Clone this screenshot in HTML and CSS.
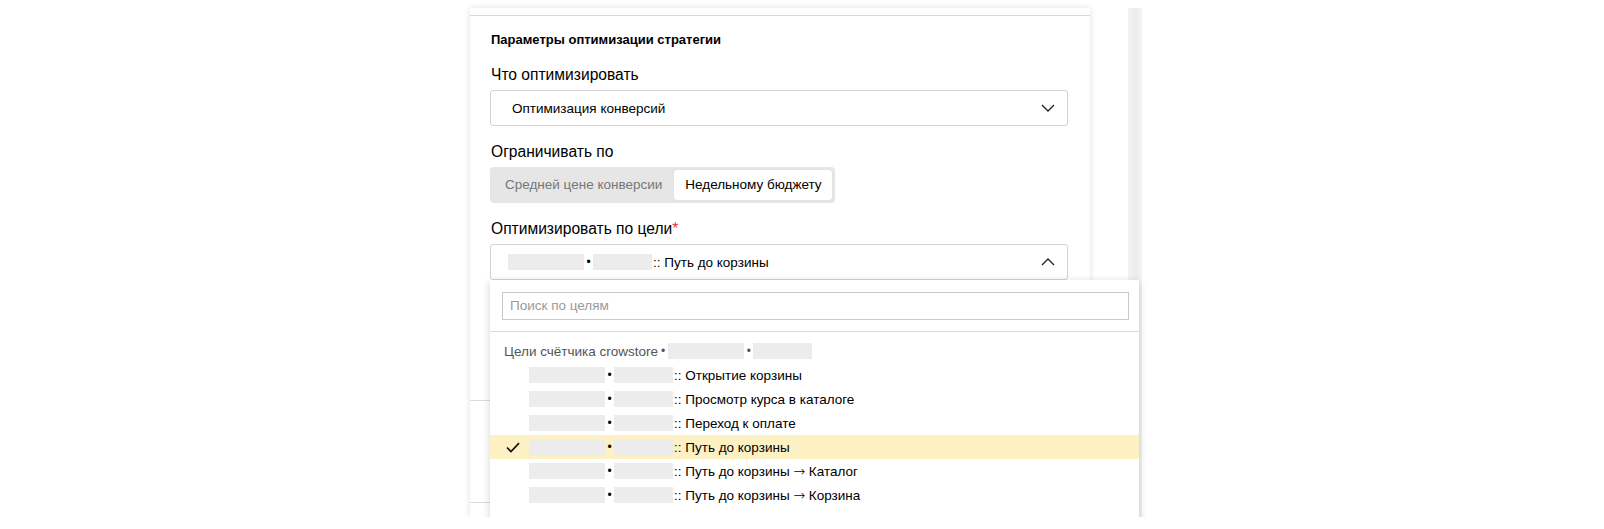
FILE: index.html
```html
<!DOCTYPE html>
<html lang="ru">
<head>
<meta charset="utf-8">
<title>Параметры оптимизации стратегии</title>
<link rel="stylesheet" href="styles.css">
</head>
<body>
<div class="page">
  <div class="panel">
    <div class="panel-top"></div>
    <div class="panel-body">
      <div class="section-title">Параметры оптимизации стратегии</div>

      <div class="label">Что оптимизировать</div>
      <div class="select select-main">
        <span class="select-text">Оптимизация конверсий</span>
        <svg class="chev" width="14" height="8" viewBox="0 0 14 8"><polyline points="1,1 7,7 13,1" fill="none" stroke="#222" stroke-width="1.3"/></svg>
      </div>

      <div class="label">Ограничивать по</div>
      <div class="segmented">
        <div class="seg">Средней цене конверсии</div>
        <div class="seg seg-active">Недельному бюджету</div>
      </div>

      <div class="label">Оптимизировать по цели<span class="req">*</span></div>
      <div class="goal-field">
        <div class="select select-goal">
          <span class="goal"><span class="blk blk-a"></span><span class="dot">•</span><span class="blk blk-b"></span><span class="goal-name">:: Путь до корзины</span></span>
          <svg class="chev" width="14" height="8" viewBox="0 0 14 8"><polyline points="1,7 7,1 13,7" fill="none" stroke="#222" stroke-width="1.3"/></svg>
        </div>

        <div class="popup">
          <div class="search-wrap">
            <div class="search">Поиск по целям</div>
          </div>
          <div class="list">
            <div class="group">Цели счётчика crowstore <span class="dot-g">•</span><span class="blk blk-a"></span><span class="dot">•</span><span class="blk blk-b"></span></div>
            <div class="item"><span class="check"></span><span class="blk blk-a"></span><span class="dot">•</span><span class="blk blk-b"></span><span class="goal-name">:: Открытие корзины</span></div>
            <div class="item"><span class="check"></span><span class="blk blk-a"></span><span class="dot">•</span><span class="blk blk-b"></span><span class="goal-name">:: Просмотр курса в каталоге</span></div>
            <div class="item"><span class="check"></span><span class="blk blk-a"></span><span class="dot">•</span><span class="blk blk-b"></span><span class="goal-name">:: Переход к оплате</span></div>
            <div class="item item-selected"><span class="check"><svg width="14" height="11" viewBox="0 0 14 11"><polyline points="1,5.5 5,9.5 13,1.2" fill="none" stroke="#111" stroke-width="1.7"/></svg></span><span class="blk blk-a"></span><span class="dot">•</span><span class="blk blk-b"></span><span class="goal-name">:: Путь до корзины</span></div>
            <div class="item"><span class="check"></span><span class="blk blk-a"></span><span class="dot">•</span><span class="blk blk-b"></span><span class="goal-name">:: Путь до корзины <span class="arrow">→</span> Каталог</span></div>
            <div class="item"><span class="check"></span><span class="blk blk-a"></span><span class="dot">•</span><span class="blk blk-b"></span><span class="goal-name">:: Путь до корзины <span class="arrow">→</span> Корзина</span></div>
          </div>
        </div>
      </div>

      <div class="under-space"></div>
      <div class="divider"></div>
      <div class="under-space under-second"></div>
      <div class="divider"></div>
    </div>
  </div>
  <div class="scroll-strip"></div>
</div>
</body>
</html>
```

FILE: styles.css
```css
* { box-sizing: border-box; }

html, body {
  margin: 0;
  padding: 0;
  background: #fff;
}

body {
  font-family: "Liberation Sans", Arial, sans-serif;
  color: #000;
}

.page {
  display: flex;
  align-items: stretch;
  padding: 8px 0 0 470px;
  height: 517px;
  overflow: hidden;
}

.panel {
  width: 620px;
  background: #fff;
  box-shadow: 0 0 6px rgba(0, 0, 0, 0.13);
  position: relative;
}

.panel-top {
  height: 8px;
  border-bottom: 1px solid #d9d9d9;
}

.panel-body {
  padding: 0 22px 0 20px;
}

.section-title {
  margin-top: 16px;
  font-size: 13px;
  line-height: 16px;
  font-weight: bold;
  padding-left: 1px;
}

.label {
  margin-top: 16px;
  font-size: 15.6px;
  line-height: 20px;
  padding-left: 1px;
}

.section-title + .label {
  margin-top: 17px;
}

.req {
  color: #e03a3a;
}

.select {
  margin-top: 5px;
  height: 36px;
  border: 1px solid #d2d2d2;
  border-radius: 3px;
  display: flex;
  align-items: center;
  justify-content: space-between;
  font-size: 13.5px;
  padding: 0 12px 0 21px;
  background: #fff;
}

.select-goal {
  padding-left: 17px;
}

.chev {
  display: block;
}

.segmented {
  margin-top: 5px;
  display: inline-flex;
  padding: 3px;
  background: #e6e6e6;
  border-radius: 4px;
  height: 36px;
}

.seg {
  height: 30px;
  line-height: 30px;
  font-size: 13.5px;
  padding: 0 12px;
  color: #777;
}

.seg-active {
  background: #fff;
  color: #000;
  border-radius: 3px;
  padding: 0 10px 0 11px;
  box-shadow: 0 0 1px rgba(0, 0, 0, 0.15);
}

.goal-field {
  position: relative;
}

.goal {
  display: flex;
  align-items: center;
}

.blk {
  display: inline-block;
  height: 16px;
  background: #ececec;
}

.blk-a { width: 76px; }
.blk-b { width: 59px; }

.dot {
  display: inline-block;
  width: 9px;
  text-align: center;
  font-size: 12px;
  line-height: 16px;
}

.goal-name {
  margin-left: 1px;
  white-space: nowrap;
}

.arrow {
  font-family: "DejaVu Sans", sans-serif;
  font-size: 14px;
  font-weight: 300;
}

.popup {
  position: absolute;
  top: 100%;
  left: 0;
  width: 649px;
  height: 260px;
  background: #fff;
  box-shadow: 0 2px 8px rgba(0, 0, 0, 0.18);
  z-index: 5;
}

.search-wrap {
  padding: 12px 10px 11px 12px;
  border-bottom: 1px solid #dcdcdc;
}

.search {
  height: 28px;
  border: 1px solid #c8c8c8;
  font-size: 13.5px;
  line-height: 26px;
  color: #9a9a9a;
  padding-left: 7px;
}

.list {
  padding-top: 7px;
  font-size: 13.5px;
}

.group {
  height: 24px;
  display: flex;
  align-items: center;
  padding-left: 14px;
  color: #555;
  white-space: nowrap;
}

.dot-g {
  margin-left: 3px;
  margin-right: 3px;
  font-size: 12px;
}

.item {
  height: 24px;
  display: flex;
  align-items: center;
  padding-left: 16px;
}

.item-selected {
  background: #fdf0c2;
}

.check {
  width: 23px;
  height: 11px;
  display: flex;
  align-items: center;
}

.check svg {
  display: block;
}

.under-space {
  height: 120px;
}

.under-second {
  height: 101px;
}

.divider {
  margin: 0 -22px 0 -20px;
  border-top: 1px solid #dcdcdc;
}

.scroll-strip {
  margin-left: 38px;
  width: 14px;
  background: linear-gradient(to right, #f3f3f3, #ececec 60%, #f5f5f5);
}
```
